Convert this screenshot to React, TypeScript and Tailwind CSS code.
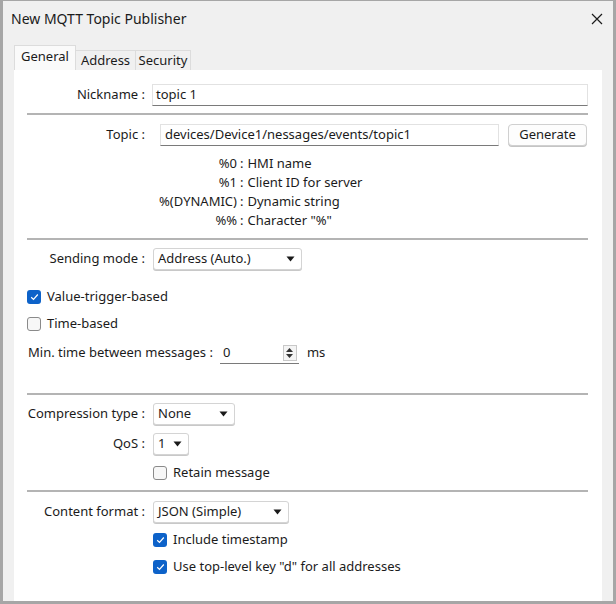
import { useState } from "react";

function Caret() {
  return (
    <svg width="9" height="6" viewBox="0 0 9 6" className="shrink-0">
      <path d="M0.5 0.5h8L4.5 5.5z" fill="#1a1a1a" />
    </svg>
  );
}

function Select({ value, width }: { value: string; width: string }) {
  return (
    <div
      className={`flex h-[22px] items-center justify-between rounded-[3px] border border-[#d4d4d4] bg-white pl-[4px] pr-[6px] shadow-[0_1px_0_#c8c8c8] ${width}`}
    >
      <span>{value}</span>
      <Caret />
    </div>
  );
}

function Check({ checked, label }: { checked: boolean; label: string }) {
  return (
    <div className="flex h-[20px] items-center gap-[6px]">
      {checked ? (
        <div className="flex h-[14px] w-[14px] items-center justify-center rounded-[3px] bg-[#0d62c9]">
          <svg width="9" height="8" viewBox="0 0 9 8">
            <path d="M1.2 4.2l2.3 2.2L7.8 1.5" fill="none" stroke="#fff" strokeWidth="1.2" />
          </svg>
        </div>
      ) : (
        <div className="h-[14px] w-[14px] rounded-[3px] border border-[#8a8a8a] bg-[#f7f7f7]" />
      )}
      <span>{label}</span>
    </div>
  );
}

function Divider({ className }: { className: string }) {
  return <div className={`ml-[13px] mr-[14px] h-[2px] bg-[#b4b4b4] ${className}`} />;
}

const help = [
  ["%0", "HMI name"],
  ["%1", "Client ID for server"],
  ["%(DYNAMIC)", "Dynamic string"],
  ["%%", 'Character "%"'],
];

const tabs = [
  { name: "General", w: "w-[62px]" },
  { name: "Address", w: "w-[61px]" },
  { name: "Security", w: "w-[56px]" },
];

export default function App() {
  const [tab, setTab] = useState("General");

  return (
    <div
      className="flex h-[604px] w-[616px] flex-col border-x-[3px] border-t border-b-[3px] border-[#a6a6a6] bg-[#f0f0f0] text-[13px] text-[#1b1b1b]"
      style={{ fontFamily: '"Noto Sans", sans-serif' }}
    >
      <div className="flex h-[35px] items-center justify-between pl-[8px] pr-[10px]">
        <span className="text-[14px]">New MQTT Topic Publisher</span>
        <svg width="12" height="12" viewBox="0 0 12 12">
          <path d="M1 1l10 10M11 1L1 11" stroke="#1b1b1b" strokeWidth="1.2" />
        </svg>
      </div>

      <div className="ml-[11px] mt-[9px] flex items-end">
        {tabs.map((t) =>
          t.name === tab ? (
            <button
              key={t.name}
              onClick={() => setTab(t.name)}
              className={`h-[25px] border border-b-0 border-[#dcdcdc] bg-[#fafafa] pb-[2px] ${t.w}`}
            >
              {t.name}
            </button>
          ) : (
            <button
              key={t.name}
              onClick={() => setTab(t.name)}
              className={`-ml-px h-[20px] border border-b-0 border-[#dcdcdc] bg-[#f0f0f0] pb-[2px] leading-[16px] ${t.w}`}
            >
              {t.name}
            </button>
          )
        )}
      </div>

      <div className="ml-[11px] mr-[11px] flex flex-1 flex-col bg-white">
        <div className="mt-[14px] flex items-center">
          <span className="w-[131px] text-right">Nickname :</span>
          <div className="ml-[7px] mr-[14px] flex h-[22px] flex-1 items-center border border-[#e2e2e2] border-b-[#7a7a7a] px-[3px]">
            topic 1
          </div>
        </div>

        <Divider className="mt-[7px]" />

        <div className="mt-[9px] flex items-center">
          <span className="w-[131px] text-right">Topic :</span>
          <div className="ml-[15px] flex h-[22px] w-[339px] items-center border border-[#e2e2e2] border-b-[#7a7a7a] px-[4px]">
            devices/Device1/nessages/events/topic1
          </div>
          <button className="ml-[9px] h-[22px] w-[79px] rounded-[4px] border border-[#d0d0d0] bg-[#fdfdfd] shadow-[0_1px_0_#c4c4c4]">
            Generate
          </button>
        </div>

        <div className="mt-[8px] flex flex-col leading-[19px]">
          {help.map(([k, v]) => (
            <div key={k} className="flex">
              <span className="w-[223px] text-right">{k}</span>
              <span className="ml-[3px]">:</span>
              <span className="ml-[4px]">{v}</span>
            </div>
          ))}
        </div>

        <Divider className="mt-[8px]" />

        <div className="mt-[8px] flex items-center">
          <span className="w-[131px] text-right">Sending mode :</span>
          <div className="ml-[8px]">
            <Select value="Address (Auto.)" width="w-[149px]" />
          </div>
        </div>

        <div className="ml-[13px] mt-[17px]">
          <Check checked label="Value-trigger-based" />
        </div>
        <div className="ml-[13px] mt-[7px]">
          <Check checked={false} label="Time-based" />
        </div>

        <div className="ml-[14px] mt-[8px] flex items-center">
          <span>Min. time between messages :</span>
          <div className="ml-[7px] flex h-[22px] w-[79px] items-center justify-between border-b border-[#7a7a7a] pl-[3px] pr-[2px]">
            <span>0</span>
            <div className="flex h-[16px] w-[14px] flex-col items-center justify-center gap-[2px] border border-[#c8c8c8] bg-[#f4f4f4]">
              <svg width="7" height="4" viewBox="0 0 7 4">
                <path d="M0 4L3.5 0L7 4z" fill="#333" />
              </svg>
              <svg width="7" height="4" viewBox="0 0 7 4">
                <path d="M0 0L3.5 4L7 0z" fill="#333" />
              </svg>
            </div>
          </div>
          <span className="ml-[8px]">ms</span>
        </div>

        <Divider className="mt-[29px]" />

        <div className="mt-[8px] flex items-center">
          <span className="w-[131px] text-right">Compression type :</span>
          <div className="ml-[8px]">
            <Select value="None" width="w-[82px]" />
          </div>
        </div>
        <div className="mt-[8px] flex items-center">
          <span className="w-[131px] text-right">QoS :</span>
          <div className="ml-[8px]">
            <Select value="1" width="w-[36px]" />
          </div>
        </div>
        <div className="ml-[139px] mt-[8px]">
          <Check checked={false} label="Retain message" />
        </div>

        <Divider className="mt-[7px]" />

        <div className="mt-[9px] flex items-center">
          <span className="w-[131px] text-right">Content format :</span>
          <div className="ml-[8px]">
            <Select value="JSON (Simple)" width="w-[136px]" />
          </div>
        </div>
        <div className="ml-[139px] mt-[7px]">
          <Check checked label="Include timestamp" />
        </div>
        <div className="ml-[139px] mt-[7px]">
          <Check checked label={'Use top-level key "d" for all addresses'} />
        </div>
      </div>
    </div>
  );
}
